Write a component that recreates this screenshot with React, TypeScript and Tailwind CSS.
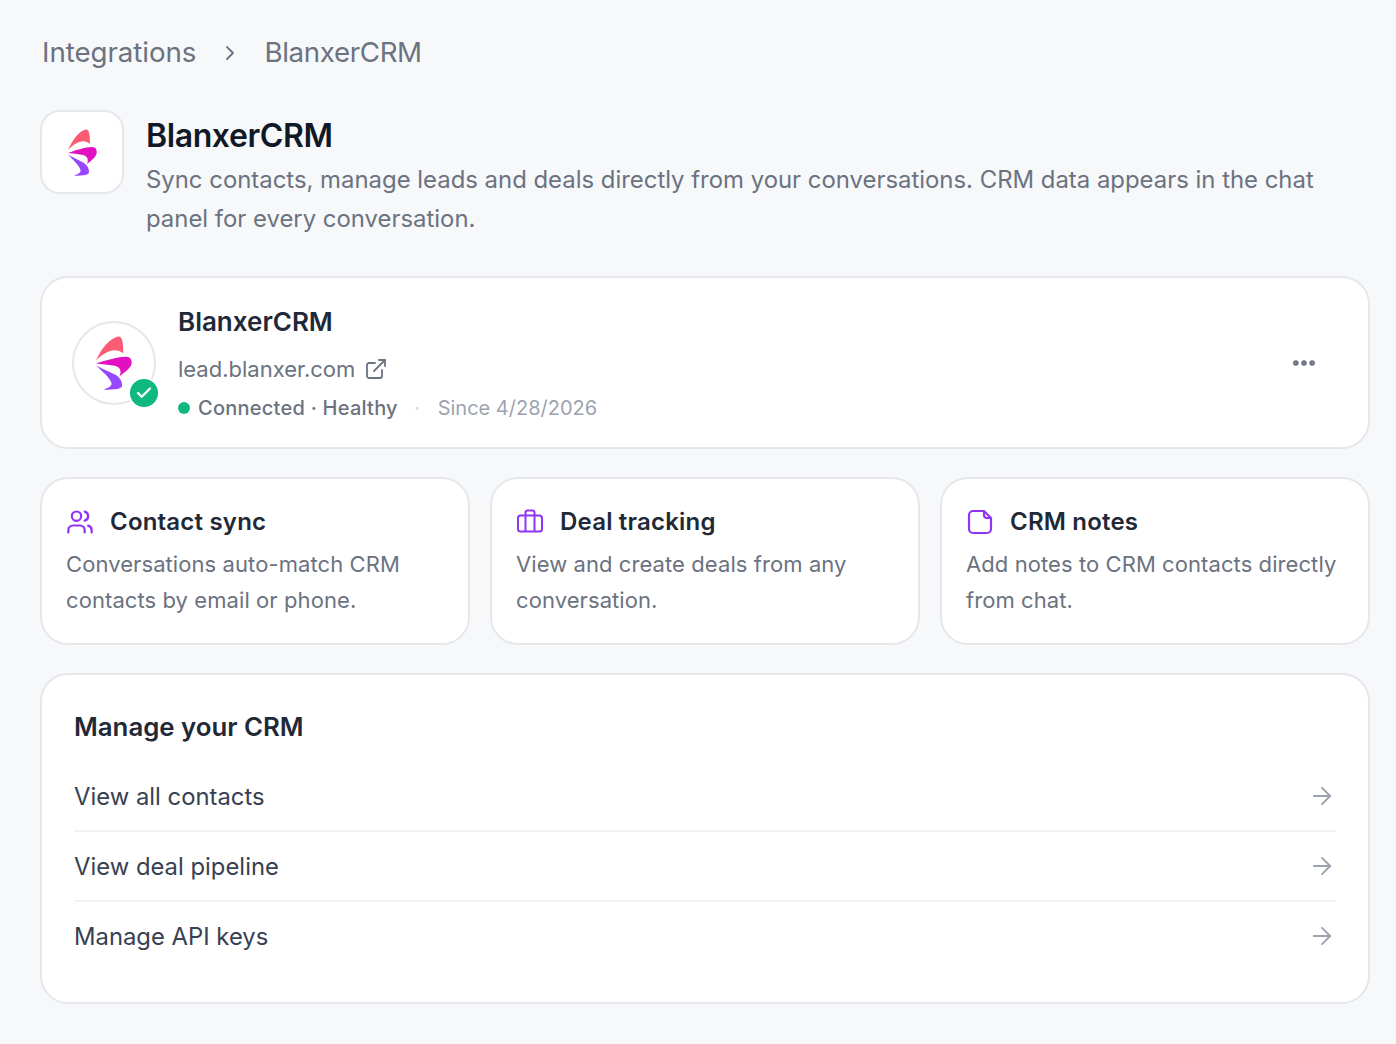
import { ArrowRight, Check, ChevronRight, Ellipsis, ExternalLink, Users } from 'lucide-react';

const features = [
  { title: 'Contact sync', icon: 'users', text: 'Conversations auto-match CRM contacts by email or phone.' },
  { title: 'Deal tracking', icon: 'case', text: 'View and create deals from any conversation.' },
  { title: 'CRM notes', icon: 'note', text: 'Add notes to CRM contacts directly from chat.' },
];

const links = ['View all contacts', 'View deal pipeline', 'Manage API keys'];

const BlanxerLogo = ({ width, height }: { width: number; height: number }) => (
  <svg width={width} height={height} viewBox="0 0 29 47" preserveAspectRatio="none" fill="none">
    <path d="M0 21C5 10 11 2 18 .5C21 0 22 5 22 15C15 9 7 14 0 21Z" fill="#fb5c73" />
    <path d="M0 24C8 21 18 18 24 18C28 18 29 21 28.700 24C28 28 24 31 19 35C21 30 19 27 15 26C10 25 5 24.500 0 24Z" fill="#e210c0" />
    <path d="M0 25.500C6 29 12 32 16 34C20 37 21 40 21 43C21 46 16 46.700 6 46.700C11 45 13 43 12.500 41C11 36 5 31 0 25.500Z" fill="#9747ff" />
  </svg>
);

const BriefcaseIcon = () => (
  <svg width="28" height="28" viewBox="0 0 28 28" fill="none" stroke="#9035f5" strokeWidth="2" strokeLinejoin="round">
    <rect x="2" y="7.500" width="24" height="16" rx="2.500" />
    <path d="M9.500 7.500V23.500M18.500 7.500V23.500" />
    <path d="M9.500 7.500V4.500a2 2 0 0 1 2-2h5a2 2 0 0 1 2 2v3" />
  </svg>
);

const NoteIcon = () => (
  <svg width="28" height="28" viewBox="0 0 28 28" fill="none" stroke="#9035f5" strokeWidth="2.200" strokeLinejoin="round">
    <path d="M7 3h11l7 7v11a4 4 0 0 1-4 4H7a4 4 0 0 1-4-4V7a4 4 0 0 1 4-4Z" />
    <path d="M18 3v4a3 3 0 0 0 3 3h4" />
  </svg>
);

export default function App() {
  return (
    <div className="min-h-[1044px] bg-[#f7f8fa] pl-[40px] pr-[26px] pt-[33px] font-['Inter',sans-serif]">
      {/* breadcrumb */}
      <div className="flex h-[40px] items-center text-[27.700px] text-[#6b7280]">
        <span className="ml-[2px] tracking-[-0.050px]">Integrations</span>
        <ChevronRight size={24} strokeWidth={1.800} className="ml-[22px] mr-[22px]" />
        <span className="tracking-[-0.350px]">BlanxerCRM</span>
      </div>

      {/* header */}
      <div className="mt-[37px] flex gap-[22px]">
        <div className="flex size-[84px] shrink-0 items-center justify-center rounded-[20px] border-2 border-[#e5e7eb] bg-white">
          <BlanxerLogo width={29} height={47} />
        </div>
        <div className="pt-[8px]">
          <h1 className="text-[32px] font-semibold leading-[36px] tracking-[-0.4px] text-[#111827]">BlanxerCRM</h1>
          <p className="mt-[6px] text-[23.900px] leading-[39px] text-[#6b7280]">
            Sync contacts, manage leads and deals directly from your conversations. CRM data appears in the chat panel for every conversation.
          </p>
        </div>
      </div>

      {/* connection card */}
      <div className="mt-[38px] flex h-[173px] items-center rounded-[28px] border-2 border-[#e5e7eb] bg-white pl-[30px] pr-[50px]">
        <div className="relative size-[84px] shrink-0">
          <div className="flex size-[84px] items-center justify-center rounded-full border-2 border-[#e5e7eb] bg-white">
            <BlanxerLogo width={36} height={54} />
          </div>
          <span className="absolute bottom-[-4px] right-[-4px] flex size-[32px] items-center justify-center rounded-full border-2 border-white bg-[#10b981]">
            <Check size={18} strokeWidth={3} className="text-white" />
          </span>
        </div>
        <div className="ml-[22px] flex-1 pt-[3px]">
          <div className="text-[26px] font-semibold leading-[34px] text-[#1f2937]">BlanxerCRM</div>
          <div className="mt-[14px] flex items-center gap-[9px] text-[22px] leading-[32px] text-[#6b7280]">
            lead.blanxer.com
            <ExternalLink size={24} strokeWidth={1.800} />
          </div>
          <div className="mt-[8px] flex items-center text-[20px] leading-[30px]">
            <span className="size-[12px] rounded-full bg-[#10b981]" />
            <span className="ml-[8px] font-medium tracking-[0.250px] text-[#6b7280]">Connected · Healthy</span>
            <span className="ml-[16px] text-[#d1d5db]">·</span>
            <span className="ml-[18px] text-[#9ca3af]">Since 4/28/2026</span>
          </div>
        </div>
        <Ellipsis size={28} strokeWidth={2.800} className="text-[#6b7280]" />
      </div>

      {/* features */}
      <div className="mt-[28px] grid grid-cols-3 gap-[20px]">
        {features.map((f) => (
          <div key={f.title} className="h-[168px] rounded-[28px] border-2 border-[#e5e7eb] bg-white px-[24px] pt-[25px]">
            <div className="flex items-center gap-[16px]">
              {f.icon === 'users' && <Users size={28} strokeWidth={1.900} className="text-[#9035f5]" />}
              {f.icon === 'case' && <BriefcaseIcon />}
              {f.icon === 'note' && <NoteIcon />}
              <span className="text-[24px] font-semibold leading-[36px] tracking-[0.200px] text-[#1f2937]">{f.title}</span>
            </div>
            <p className="mt-[6px] text-[22px] leading-[36px] tracking-[0.080px] text-[#6b7280]">{f.text}</p>
          </div>
        ))}
      </div>

      {/* manage */}
      <div className="mt-[28px] h-[331px] rounded-[28px] border-2 border-[#e5e7eb] bg-white px-[32px] pt-[33px]">
        <h2 className="text-[25.800px] font-semibold leading-[38px] text-[#1f2937]">Manage your CRM</h2>
        <div className="mt-[16px]">
          {links.map((l, i) => (
            <div key={l} className={`flex h-[70px] items-center justify-between border-b-2 ${i < links.length - 1 ? 'border-[#f3f4f6]' : 'border-transparent'}`}>
              <span className="pt-[2px] text-[23.800px] tracking-[0.020px] text-[#374151]">{l}</span>
              <ArrowRight size={28} strokeWidth={1.600} className="text-[#9ca3af]" />
            </div>
          ))}
        </div>
      </div>
    </div>
  );
}
